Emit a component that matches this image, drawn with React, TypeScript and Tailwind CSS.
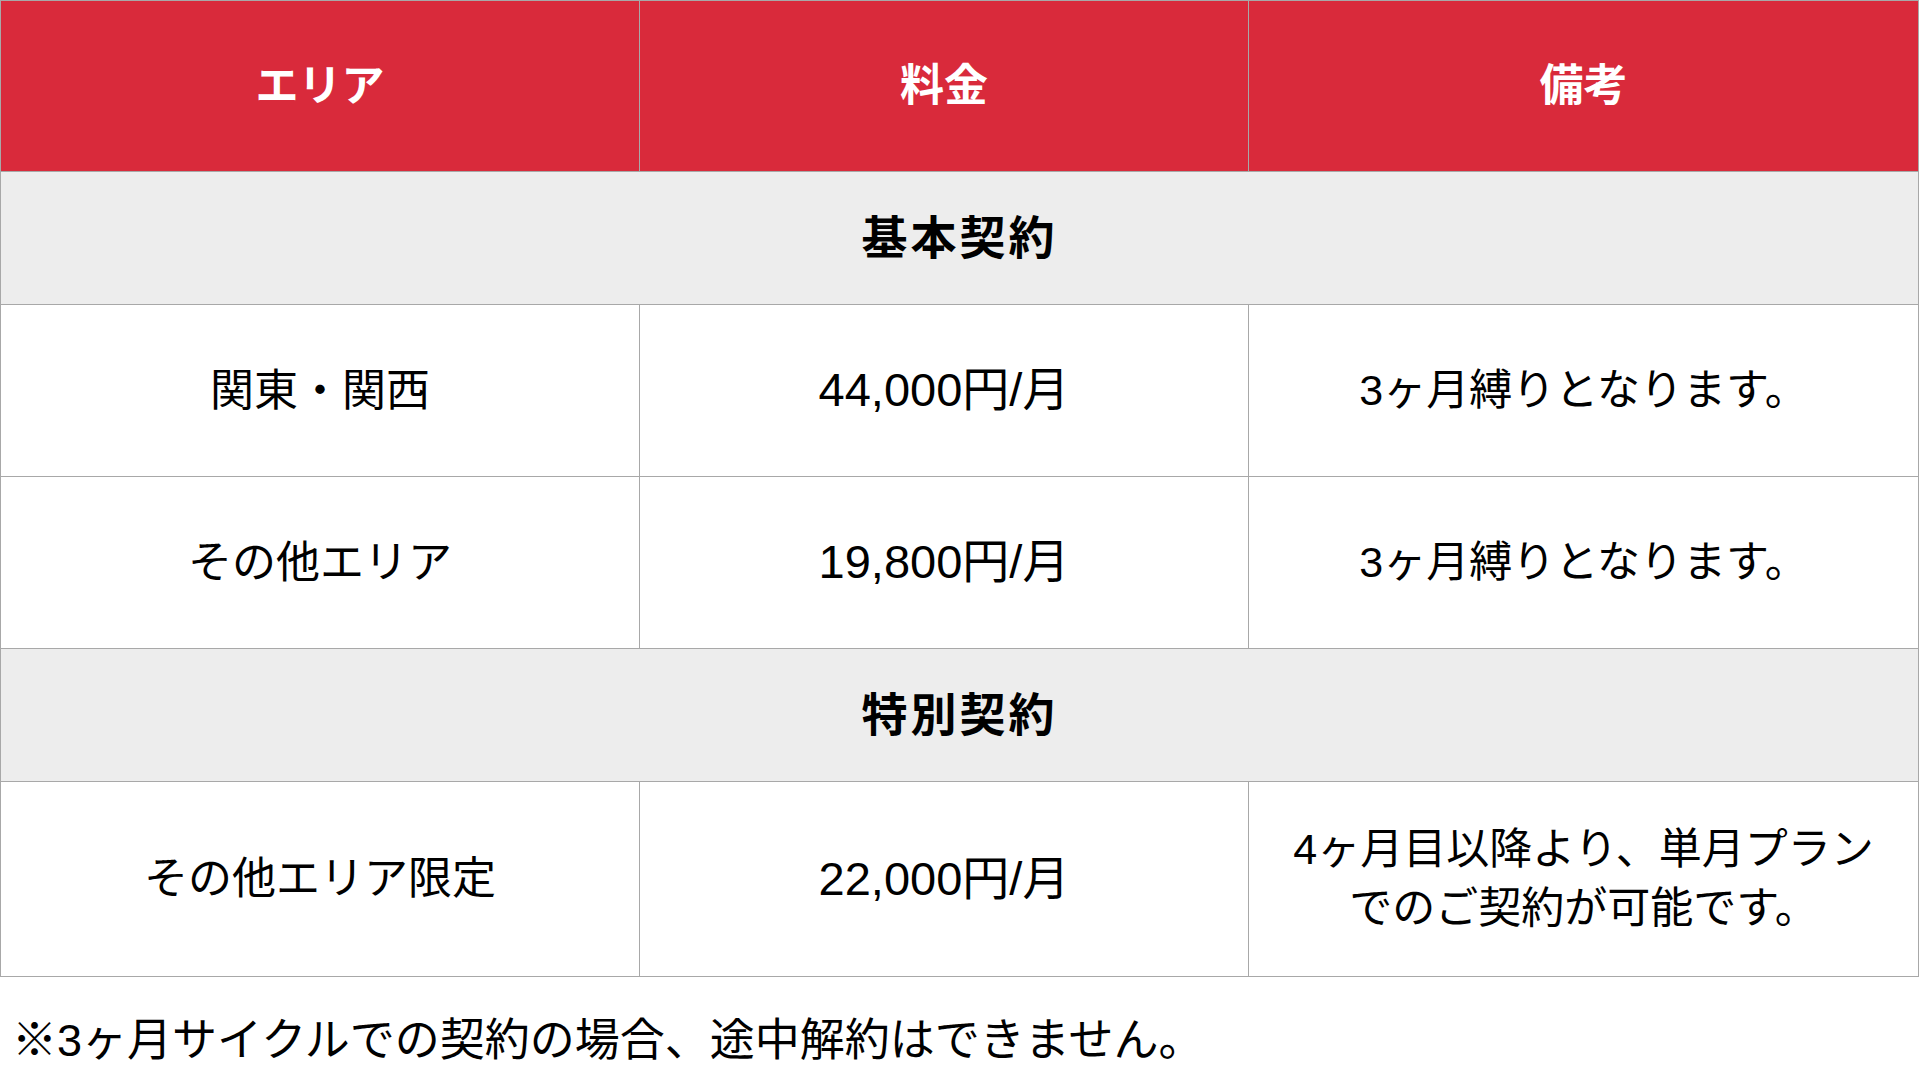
import React from 'react';

type Row = { area: string; price: string; note: React.ReactNode; tall?: boolean };

const basic: Row[] = [
  { area: '関東・関西', price: '44,000円/月', note: '3ヶ月縛りとなります。' },
  { area: 'その他エリア', price: '19,800円/月', note: '3ヶ月縛りとなります。' },
];

const special: Row[] = [
  {
    area: 'その他エリア限定',
    price: '22,000円/月',
    note: (
      <>
        4ヶ月目以降より、単月プラン
        <br />
        でのご契約が可能です。
      </>
    ),
    tall: true,
  },
];

const cell = 'border border-[#a8a8a8] text-center align-middle';

const SectionRow = ({ label }: { label: string }) => (
  <tr className="h-[133px] bg-[#ededed]">
    <td colSpan={3} className={`${cell} text-[46px] font-bold tracking-[3px]`}>{label}</td>
  </tr>
);

const DataRow = ({ row }: { row: Row }) => (
  <tr className={row.tall ? 'h-[195px]' : 'h-[172px]'}>
    <td className={`${cell} text-[44px]`}>{row.area}</td>
    <td className={`${cell} text-[47px]`}>{row.price}</td>
    <td className={`${cell} text-[43px] leading-[59px]`}>{row.note}</td>
  </tr>
);

export default function App() {
  return (
    <div
      className="w-full min-h-screen bg-white text-black"
      style={{ fontFamily: '"Liberation Sans", "Noto Sans CJK JP", sans-serif' }}
    >
      <table className="w-full table-fixed border-collapse">
        <colgroup>
          <col className="w-[639px]" />
          <col className="w-[609px]" />
          <col />
        </colgroup>
        <thead>
          <tr className="h-[171px] bg-[#d92a3b] text-white">
            <th className={`${cell} text-[43px] font-bold`}>エリア</th>
            <th className={`${cell} text-[44px] font-bold`}>料金</th>
            <th className={`${cell} text-[44px] font-bold`}>備考</th>
          </tr>
        </thead>
        <tbody>
          <SectionRow label="基本契約" />
          {basic.map(r => <DataRow key={r.area} row={r} />)}
          <SectionRow label="特別契約" />
          {special.map(r => <DataRow key={r.area} row={r} />)}
        </tbody>
      </table>
      <p className="mt-[34px] pl-[12px] text-[45px] leading-[60px]">
        ※3ヶ月サイクルでの契約の場合、途中解約はできません。
      </p>
    </div>
  );
}
